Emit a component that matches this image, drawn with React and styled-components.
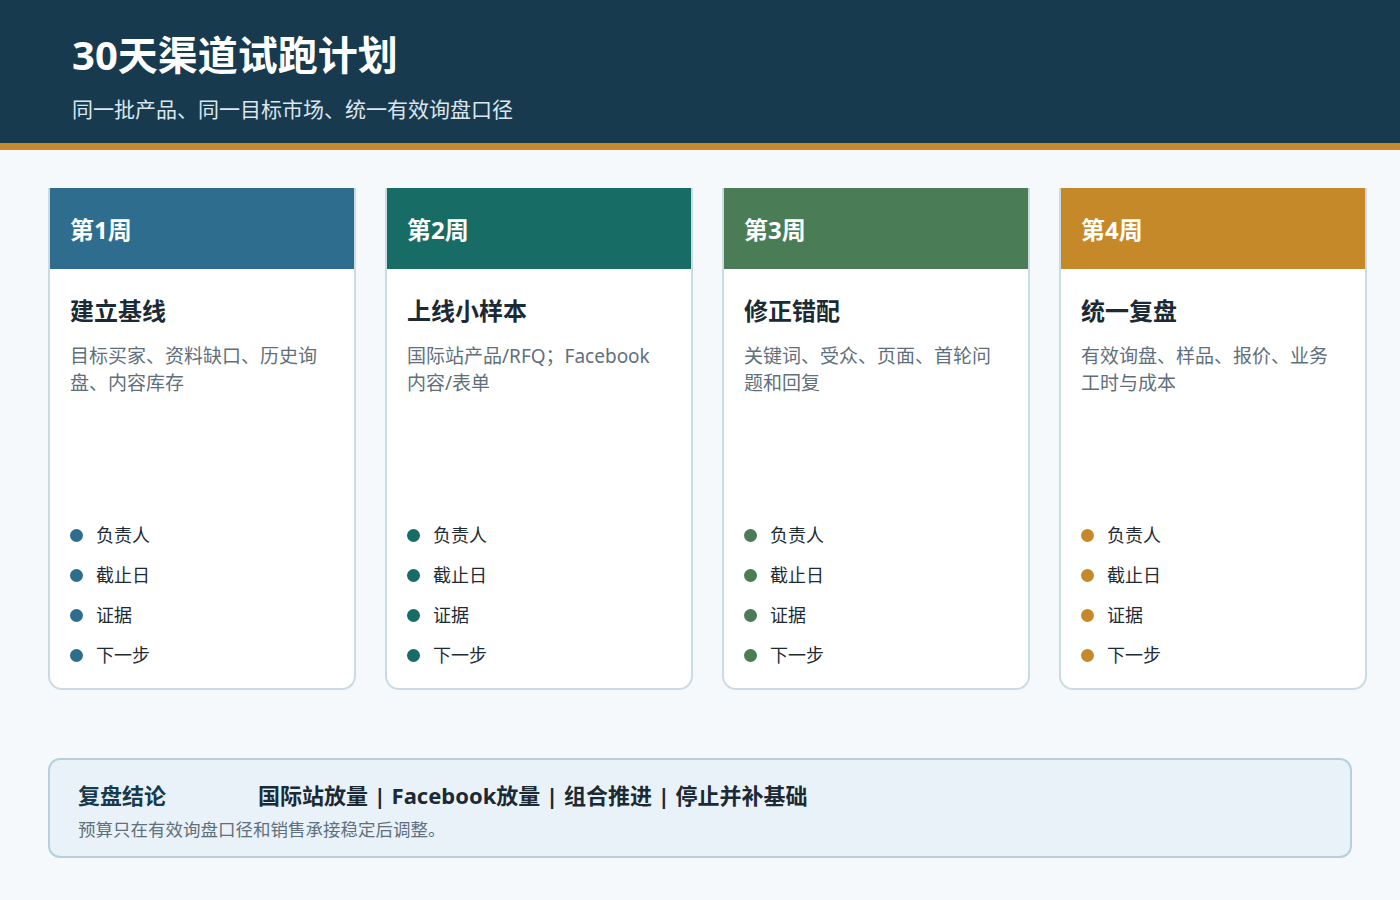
import styled, { createGlobalStyle } from "styled-components";

const GlobalStyle = createGlobalStyle`
  body {
    margin: 0;
    background: #f5f9fb;
    font-family: "Noto Sans", "Noto Sans CJK SC", sans-serif;
  }
`;

const weeks = [
  { label: "第1周", color: "#2e6d8e", title: "建立基线", desc: "目标买家、资料缺口、历史询盘、内容库存" },
  { label: "第2周", color: "#176d66", title: "上线小样本", desc: "国际站产品/RFQ；Facebook 内容/表单" },
  { label: "第3周", color: "#4a7c56", title: "修正错配", desc: "关键词、受众、页面、首轮问题和回复" },
  { label: "第4周", color: "#c6892a", title: "统一复盘", desc: "有效询盘、样品、报价、业务工时与成本" },
];

const items = ["负责人", "截止日", "证据", "下一步"];

export default function App() {
  return (
    <Page>
      <GlobalStyle />
      <Header>
        <Title>30天渠道试跑计划</Title>
        <Subtitle>同一批产品、同一目标市场、统一有效询盘口径</Subtitle>
      </Header>
      <Grid>
        {weeks.map((w) => (
          <Card key={w.label}>
            <CardHead $color={w.color}>{w.label}</CardHead>
            <CardBody>
              <CardTitle>{w.title}</CardTitle>
              <CardDesc>{w.desc}</CardDesc>
              <List>
                {items.map((it) => (
                  <Item key={it}>
                    <Dot $color={w.color} />
                    {it}
                  </Item>
                ))}
              </List>
            </CardBody>
          </Card>
        ))}
      </Grid>
      <Summary>
        <SummaryRow>
          <SummaryLabel>复盘结论</SummaryLabel>
          <SummaryMain>国际站放量 | Facebook放量 | 组合推进 | 停止并补基础</SummaryMain>
        </SummaryRow>
        <SummaryNote>预算只在有效询盘口径和销售承接稳定后调整。</SummaryNote>
      </Summary>
    </Page>
  );
}

const Page = styled.div`
  width: 1400px;
  height: 900px;
  background: #f5f9fb;
  overflow: hidden;
`;

const Header = styled.div`
  height: 143px;
  box-sizing: border-box;
  background: #183a4f;
  border-bottom: 7px solid #c68a2a;
  padding: 28px 72px 0;
  height: 150px;
`;

const Title = styled.div`
  color: #fff;
  font-size: 40px;
  font-weight: 700;
  line-height: 54px;
`;

const Subtitle = styled.div`
  color: #dbe6ee;
  font-size: 21px;
  margin-top: 12px;
  line-height: 30px;
`;

const Grid = styled.div`
  display: grid;
  grid-template-columns: repeat(4, 308px);
  gap: 29px;
  padding: 38px 48px 0;
`;

const Card = styled.div`
  height: 502px;
  background: #fff;
  border: 2px solid #cbdbe3;
  border-top: none;
  border-radius: 0 0 14px 14px;
  display: flex;
  flex-direction: column;
  overflow: hidden;
  box-sizing: border-box;
`;

const CardHead = styled.div`
  height: 81px;
  background: ${(p) => p.$color};
  color: #fff;
  font-size: 24px;
  font-weight: 700;
  display: flex;
  align-items: center;
  padding-left: 22px;
  margin: 0 -2px;
`;

const CardBody = styled.div`
  flex: 1;
  display: flex;
  flex-direction: column;
  padding: 22px 20px 20px;
`;

const CardTitle = styled.div`
  font-size: 24px;
  font-weight: 700;
  color: #1b2a35;
  line-height: 40px;
`;

const CardDesc = styled.div`
  margin-top: 12px;
  font-size: 19px;
  line-height: 27px;
  color: #5f707c;
`;

const List = styled.div`
  margin-top: auto;
  display: flex;
  flex-direction: column;
  gap: 14px;
`;

const Item = styled.div`
  display: flex;
  align-items: center;
  gap: 13px;
  font-size: 18px;
  line-height: 26px;
  color: #1f2b33;
`;

const Dot = styled.span`
  width: 13px;
  height: 13px;
  border-radius: 50%;
  background: ${(p) => p.$color};
`;

const Summary = styled.div`
  margin: 68px 48px 0;
  height: 100px;
  box-sizing: border-box;
  background: #eaf2f9;
  border: 2px solid #b7cfdc;
  border-radius: 12px;
  padding: 18px 28px 0;
`;

const SummaryRow = styled.div`
  display: flex;
  align-items: center;
`;

const SummaryLabel = styled.div`
  width: 180px;
  font-size: 22px;
  font-weight: 700;
  color: #183a4f;
  line-height: 34px;
`;

const SummaryMain = styled.div`
  font-size: 22px;
  font-weight: 700;
  color: #1b2a35;
  line-height: 34px;
`;

const SummaryNote = styled.div`
  margin-top: 4px;
  font-size: 17.5px;
  color: #5f707c;
  line-height: 26px;
`;
